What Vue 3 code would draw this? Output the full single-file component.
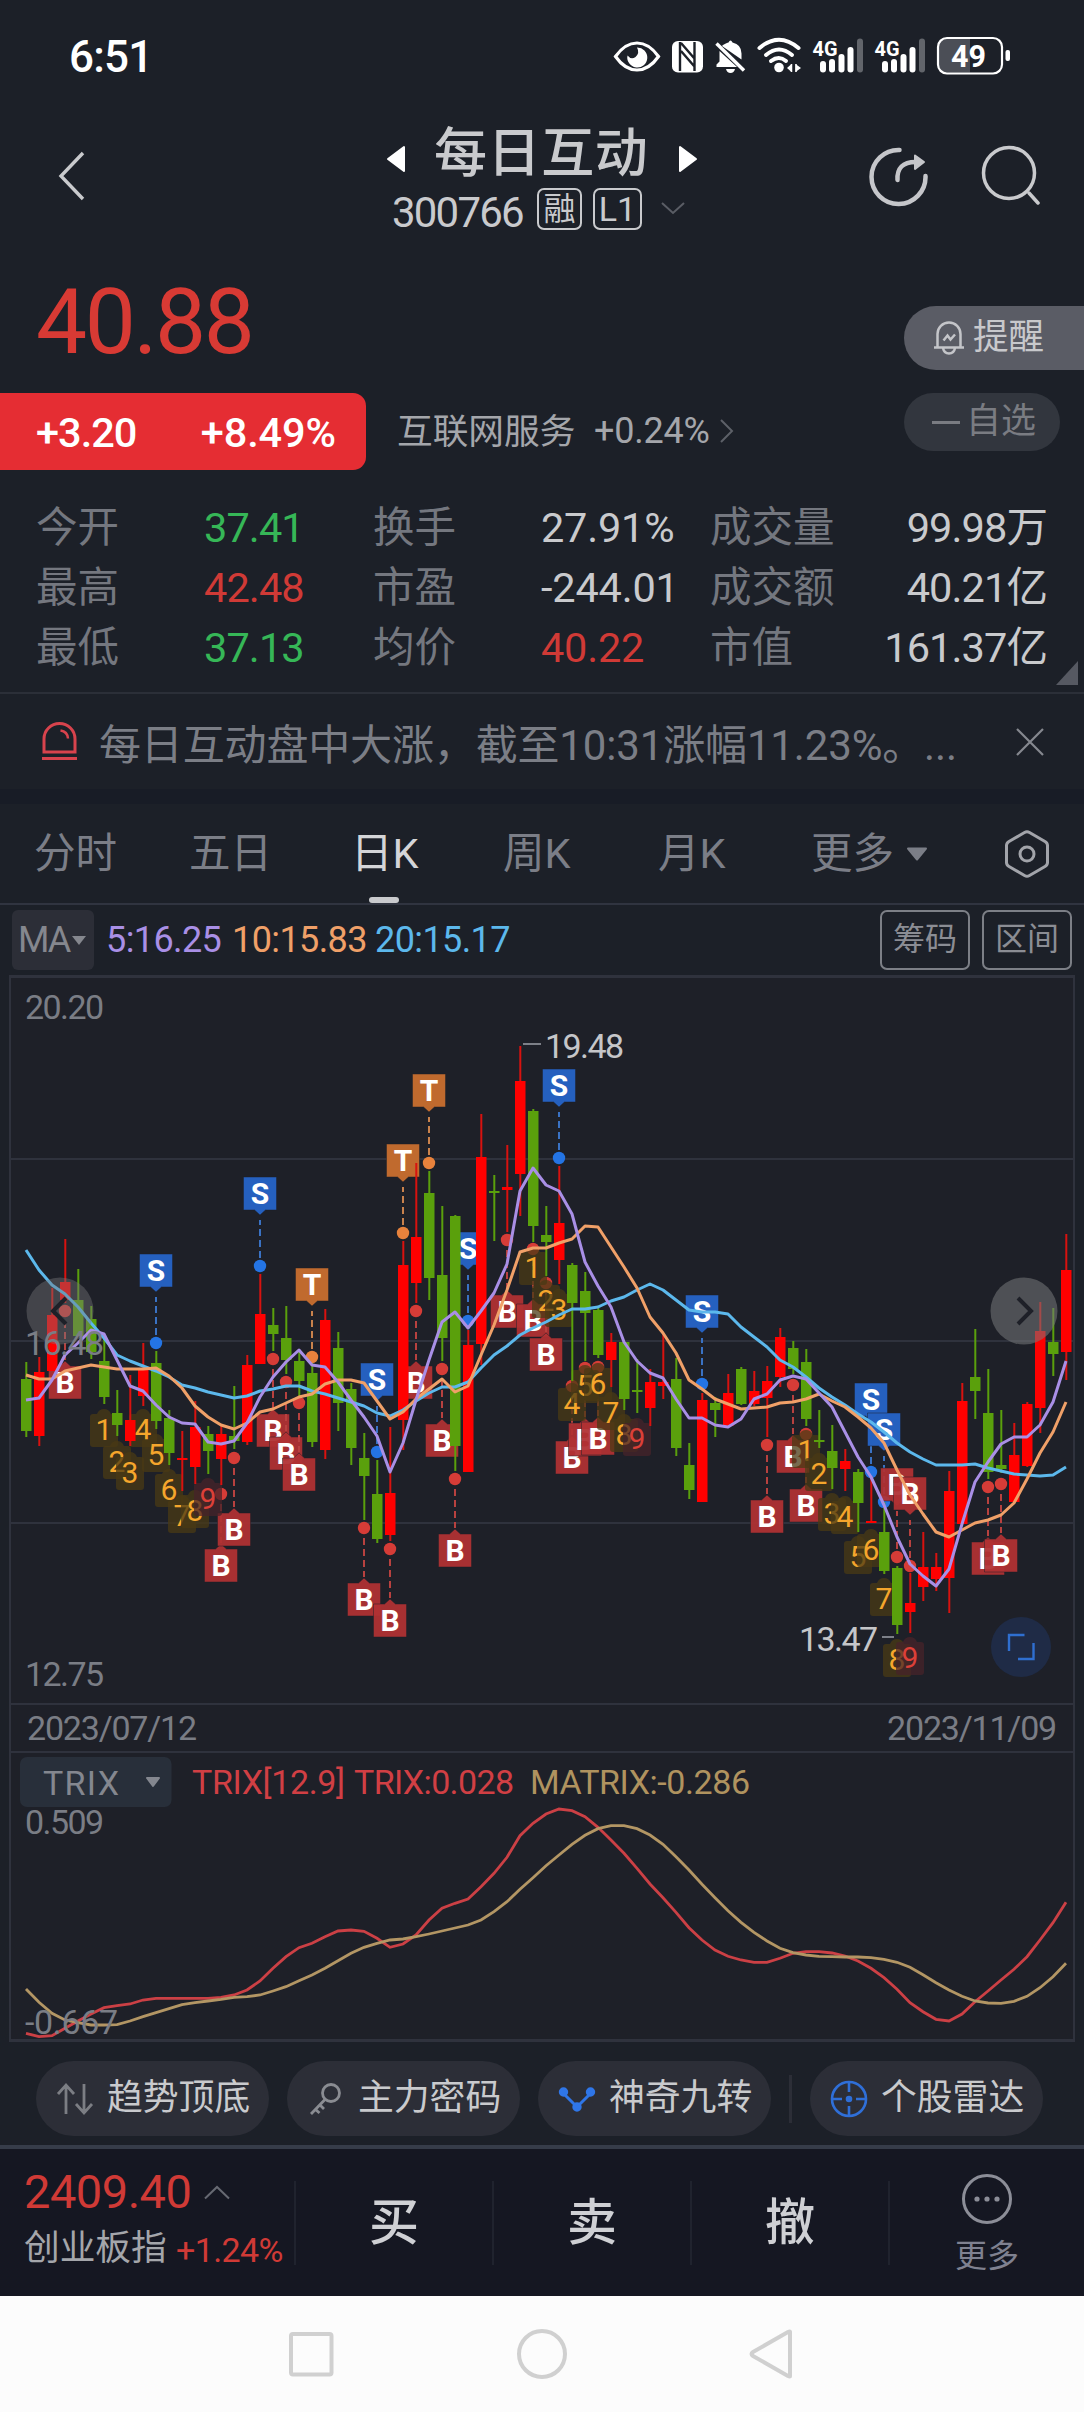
<script setup>
import { computed } from "vue";

const stats = [
  [
    { label: "今开", value: "37.41", tone: "down" },
    { label: "换手", value: "27.91%", tone: "" },
    { label: "成交量", value: "99.98万", tone: "" },
  ],
  [
    { label: "最高", value: "42.48", tone: "up" },
    { label: "市盈", value: "-244.01", tone: "" },
    { label: "成交额", value: "40.21亿", tone: "" },
  ],
  [
    { label: "最低", value: "37.13", tone: "down" },
    { label: "均价", value: "40.22", tone: "up" },
    { label: "市值", value: "161.37亿", tone: "" },
  ],
];

const signalBars = [
  { x: 820, y: 61 },
  { x: 829, y: 59 },
  { x: 838.5, y: 54 },
  { x: 847.5, y: 47 },
  { x: 857, y: 38.5 },
];

// x position of the i-th candle
const STEP = 13;
const xAt = (i) => 26 + i * STEP;

// [up?, high, body top, body bottom, low] in chart coordinates
const rawCandles = [
  [0, 1362, 1379, 1431, 1437], [1, 1357, 1372, 1436, 1446], [1, 1288, 1315, 1371, 1371],
  [1, 1239, 1282, 1300, 1303], [0, 1269, 1300, 1336, 1336], [0, 1306, 1319, 1352, 1359],
  [0, 1335, 1361, 1397, 1404], [0, 1390, 1413, 1425, 1436], [1, 1375, 1420, 1441, 1446],
  [1, 1343, 1369, 1396, 1406], [0, 1351, 1363, 1421, 1429], [0, 1410, 1418, 1453, 1465],
  [1, 1431, 1458, 1460, 1491], [1, 1401, 1427, 1467, 1484], [0, 1426, 1434, 1451, 1474],
  [1, 1426, 1434, 1459, 1485], [0, 1386, 1436, 1441, 1449], [1, 1355, 1365, 1442, 1445],
  [1, 1274, 1314, 1364, 1364], [0, 1308, 1325, 1334, 1351], [0, 1306, 1338, 1360, 1374],
  [0, 1352, 1361, 1381, 1397], [0, 1363, 1373, 1442, 1447], [1, 1309, 1320, 1450, 1459],
  [0, 1332, 1348, 1403, 1431], [0, 1383, 1389, 1448, 1465], [0, 1433, 1458, 1476, 1520],
  [0, 1460, 1494, 1539, 1543], [1, 1427, 1493, 1535, 1541], [1, 1241, 1265, 1420, 1450],
  [1, 1163, 1237, 1283, 1303], [0, 1171, 1193, 1278, 1300], [0, 1206, 1275, 1338, 1361],
  [0, 1215, 1216, 1446, 1471], [1, 1330, 1345, 1472, 1472], [1, 1114, 1157, 1344, 1365],
  [0, 1175, 1191, 1193, 1241], [1, 1145, 1187, 1190, 1232], [1, 1046, 1081, 1174, 1216],
  [0, 1109, 1111, 1226, 1242], [0, 1206, 1235, 1242, 1276], [1, 1166, 1223, 1260, 1284],
  [0, 1263, 1265, 1303, 1381], [0, 1272, 1291, 1313, 1361], [0, 1308, 1310, 1355, 1358],
  [1, 1333, 1342, 1360, 1387], [0, 1342, 1342, 1399, 1410], [0, 1359, 1390, 1392, 1413],
  [1, 1369, 1382, 1408, 1426], [1, 1333, 1382, 1386, 1399], [0, 1358, 1379, 1448, 1456],
  [0, 1443, 1465, 1490, 1499], [1, 1393, 1400, 1502, 1502], [0, 1397, 1403, 1410, 1437],
  [1, 1374, 1393, 1426, 1426], [0, 1367, 1369, 1404, 1405], [1, 1371, 1391, 1404, 1406],
  [1, 1366, 1381, 1398, 1437], [1, 1328, 1337, 1377, 1387], [0, 1341, 1348, 1369, 1374],
  [0, 1349, 1362, 1419, 1426], [0, 1410, 1440, 1442, 1448], [0, 1425, 1451, 1468, 1489],
  [1, 1449, 1461, 1469, 1491], [0, 1469, 1472, 1503, 1532], [1, 1476, 1521, 1523, 1523],
  [0, 1502, 1532, 1571, 1574], [0, 1566, 1568, 1625, 1634], [1, 1573, 1603, 1612, 1633],
  [1, 1532, 1567, 1587, 1601], [1, 1553, 1567, 1579, 1591], [1, 1471, 1491, 1578, 1613],
  [1, 1383, 1401, 1524, 1524], [0, 1329, 1377, 1391, 1419], [0, 1369, 1413, 1472, 1479],
  [0, 1410, 1465, 1469, 1473], [1, 1423, 1455, 1502, 1502], [1, 1402, 1404, 1466, 1467],
  [1, 1302, 1331, 1408, 1433], [0, 1308, 1342, 1354, 1376], [1, 1234, 1270, 1352, 1380],
];

const candles = computed(() =>
  rawCandles.map(([up, high, top, bottom, low], i) => ({
    x: xAt(i),
    cls: up ? "rise" : "fall",
    high,
    top,
    low,
    body: bottom - top,
  }))
);

const ma5 = [
  1400, 1398, 1380, 1355, 1343, 1330, 1334, 1360, 1386, 1391, 1405, 1417, 1423, 1424, 1442, 1444,
  1441, 1423, 1397, 1377, 1362, 1350, 1365, 1367, 1382, 1400, 1417, 1436, 1472, 1443, 1400, 1360,
  1322, 1312, 1328, 1311, 1293, 1264, 1191, 1168, 1185, 1191, 1214, 1262, 1286, 1307, 1342, 1361,
  1373, 1378, 1399, 1418, 1418, 1425, 1427, 1419, 1399, 1394, 1380, 1376, 1379, 1393, 1407, 1432,
  1457, 1477, 1505, 1537, 1564, 1576, 1586, 1569, 1524, 1482, 1462, 1444, 1437, 1437, 1425, 1402,
  1361,
];
const ma10 = [
  1375, 1379, 1379, 1371, 1368, 1365, 1367, 1369, 1369, 1369, 1368, 1376, 1388, 1406, 1417, 1425,
  1429, 1423, 1412, 1409, 1403, 1397, 1394, 1384, 1380, 1380, 1383, 1401, 1419, 1412, 1399, 1389,
  1379, 1392, 1386, 1355, 1325, 1290, 1252, 1248, 1248, 1243, 1239, 1226, 1227, 1247, 1267, 1288,
  1317, 1333, 1353, 1380, 1389, 1399, 1404, 1409, 1408, 1407, 1403, 1402, 1399, 1394, 1401, 1407,
  1417, 1428, 1443, 1470, 1495, 1514, 1532, 1537, 1530, 1523, 1520, 1515, 1503, 1479, 1453, 1432,
  1402,
];
const ma20 = [
  1250, 1270, 1285, 1294, 1307, 1323, 1338, 1355, 1361, 1366, 1371, 1377, 1385, 1388, 1392, 1395,
  1398, 1396, 1391, 1389, 1386, 1386, 1391, 1394, 1398, 1402, 1406, 1413, 1416, 1410, 1401, 1393,
  1387, 1387, 1382, 1368, 1355, 1346, 1335, 1328, 1322, 1315, 1309, 1309, 1307, 1301, 1297, 1290,
  1284, 1290, 1300, 1310, 1312, 1312, 1314, 1327, 1337, 1347, 1360, 1367, 1377, 1388, 1397, 1405,
  1414, 1422, 1432, 1443, 1452, 1459, 1465, 1465, 1465, 1464, 1468, 1471, 1474, 1475, 1476, 1475,
  1467,
];

const trix = [
  1000, 1010, 1007, 985, 963, 942, 923, 917, 912, 900, 895, 895, 895, 895, 895, 892, 885, 870, 843,
  805, 770, 743, 730, 710, 693, 690, 694, 715, 742, 732, 705, 660, 625, 610, 597, 560, 520, 472,
  407, 370, 342, 327, 332, 350, 382, 420, 460, 505, 552, 593, 637, 683, 720, 750, 769, 780, 787,
  787, 775, 760, 755, 755, 759, 768, 783, 805, 833, 868, 908, 935, 958, 963, 942, 905, 873, 840,
  808, 770, 720, 668, 607,
];
const matrix = [
  867, 907, 940, 960, 968, 975, 975, 974, 963, 950, 938, 926, 914, 908, 903, 898, 892, 890, 885,
  873, 860, 842, 825, 805, 782, 760, 742, 730, 720, 717, 710, 702, 693, 684, 675, 660, 635, 605,
  568, 533, 497, 465, 433, 406, 386, 377, 377, 386, 405, 433, 470, 510, 553, 593, 632, 667, 697,
  723, 745, 758, 765, 769, 770, 771, 771, 773, 778, 787, 802, 824, 848, 870, 889, 903, 909, 910,
  904, 889, 863, 830, 790,
];

const line = (values) => values.map((y, i) => `${xAt(i)},${y}`).join(" ");
const oscLine = (values) => values.map((v, i) => `${xAt(i)},${(1700 + v / 3).toFixed(1)}`).join(" ");

// flags hung above a candle: sell (S) and T
const topFlags = [
  [10, "S", 1343], [18, "S", 1266], [22, "T", 1357], [27, "S", 1452], [29, "T", 1233],
  [31, "T", 1163], [34, "S", 1321], [41, "S", 1158], [52, "S", 1384], [65, "S", 1472],
  [66, "S", 1502], [67, "B", 1557], [68, "B", 1566],
];
// buy flags hung below a candle
const bottomFlags = [
  [3, 1311], [15, 1494], [16, 1458], [19, 1359], [20, 1382], [21, 1403], [26, 1528], [28, 1549],
  [30, 1311], [32, 1369], [33, 1479], [37, 1240], [39, 1249], [40, 1283], [42, 1386], [43, 1368],
  [44, 1367], [57, 1445], [59, 1385], [60, 1434], [74, 1487], [75, 1484],
];
// nine-turn counters
const turns = [
  [6, 1, 1429], [7, 2, 1461], [8, 3, 1472], [9, 4, 1429], [10, 5, 1454], [11, 6, 1489],
  [12, 7, 1515], [13, 8, 1510], [14, 9, 1498],
  [39, 1, 1267], [40, 2, 1300], [41, 3, 1309], [42, 4, 1403], [43, 5, 1385], [44, 6, 1383],
  [45, 7, 1412], [46, 8, 1434], [47, 9, 1438],
  [60, 1, 1450], [61, 2, 1473], [62, 3, 1513], [63, 4, 1516], [64, 5, 1556], [65, 6, 1549],
  [66, 7, 1598], [67, 8, 1659], [68, 9, 1657],
];
</script>

<template>
  <div class="screen">
    <!-- system status bar -->
    <div class="status">
      <span class="clock">6:51</span>
      <svg class="status-icons" width="400" height="40" viewBox="612 36 400 40">
        <path d="M615.500 56.500Q625 43 637 43T658.500 56.500Q649 70 637 70T615.500 56.500Z" fill="none" stroke="#fff" stroke-width="3.200" />
        <path d="M637 47.500a10 10 0 1 1-9.500 8q3.500 4.500 8 1.500q4.500-4 1.500-9.500z" fill="#fff" />
        <rect x="672" y="41" width="31" height="31.500" rx="6" fill="#fff" />
        <path d="M680 42v29M694.500 42v29M681 43L694 58M681 51l13 15" stroke="#1c2028" stroke-width="2.400" fill="none" />
        <path d="M723 45q4-2.500 5.500-2.500q1-2 2-2t2 2q9 2 9 11v6L722 46zM719.500 51L737 67H716.500v-2.500l3-3zM726 69h9q-1 4-4.500 4t-4.500-4z" fill="#fff" />
        <path d="M716.500 43.500L744 70.500" stroke="#fff" stroke-width="3.400" />
        <g fill="none" stroke="#fff" stroke-width="4" stroke-linecap="round">
          <path d="M759.500 48Q779 31.500 798.500 48" />
          <path d="M766 55Q779 44 792 55" />
          <path d="M771 61Q779 55 786 61" />
        </g>
        <circle cx="779" cy="67.500" r="4.800" fill="#fff" />
        <path d="M787 68l4.500-4v8zM801 68l-5.500-4v8z" fill="#fff" />
        <path d="M791.500 64v8M796 64v8" stroke="#fff" stroke-width="1.500" />
        <g v-for="dx in [0, 62]" :key="dx" :transform="`translate(${dx} 0)`">
          <text x="812.500" y="55.500" class="net" textLength="25" lengthAdjust="spacingAndGlyphs">4G</text>
          <rect
            v-for="(b, n) in signalBars"
            :key="n"
            :x="b.x"
            :y="b.y"
            width="6"
            :height="72.500 - b.y"
            rx="3"
            :fill="n === 4 ? '#62656b' : '#fff'"
          />
        </g>
        <path d="M970 38.500H947q-8 0-8 8v18q0 8 8 8h23z" fill="#4b4e56" />
        <rect x="938" y="38" width="64" height="35.500" rx="9" fill="none" stroke="#fff" stroke-width="2.200" />
        <rect x="1005.500" y="50" width="4.500" height="11" rx="2" fill="#fff" />
        <text x="951" y="67" class="batt" textLength="35" lengthAdjust="spacingAndGlyphs">49</text>
      </svg>
    </div>

    <!-- title bar -->
    <header class="header">
      <svg class="back" width="28" height="50" viewBox="0 0 28 50">
        <path d="M25 2L3 25L25 48" fill="none" stroke="#c9cacd" stroke-width="3.400" />
      </svg>
      <div class="title">
        <div class="name-row">
          <svg width="20" height="28" viewBox="0 0 20 28"><path d="M18 2v24L2 14z" fill="#fff" stroke="#fff" stroke-width="2" stroke-linejoin="round" /></svg>
          <span class="name">每日互动</span>
          <svg width="20" height="28" viewBox="0 0 20 28"><path d="M2 2v24L18 14z" fill="#fff" stroke="#fff" stroke-width="2" stroke-linejoin="round" /></svg>
        </div>
        <div class="code-row">
          <span class="code">300766</span>
          <span class="tag rong">融</span>
          <span class="tag level">L1</span>
          <svg width="24" height="14" viewBox="0 0 24 14"><path d="M1 1l11 10L23 1" fill="none" stroke="#5a5d65" stroke-width="2" /></svg>
        </div>
      </div>
      <div class="actions">
        <svg width="60" height="62" viewBox="868 145 60 62">
          <path d="M899.500 150A27 27 0 1 0 925.500 176" fill="none" stroke="#c5c6ca" stroke-width="4.500" stroke-linecap="round" />
          <path d="M897.500 180q-1-18 18-18" fill="none" stroke="#c5c6ca" stroke-width="4.500" stroke-linecap="round" />
          <path d="M915 155.500l9 6.500l-9 7z" fill="#c5c6ca" stroke="#c5c6ca" stroke-width="2" stroke-linejoin="round" />
        </svg>
        <svg width="60" height="62" viewBox="980 145 60 62">
          <circle cx="1009" cy="173" r="25.500" fill="none" stroke="#c9cacd" stroke-width="3.500" />
          <path d="M1029 193l9 10" stroke="#c9cacd" stroke-width="3.500" stroke-linecap="round" />
        </svg>
      </div>
    </header>

    <!-- quote -->
    <section class="quote">
      <div class="price-row">
        <span class="price">40.88</span>
        <span class="remind">
          <svg width="34" height="36" viewBox="0 0 34 36" fill="none" stroke="#c4c5c9" stroke-width="2.500">
            <path d="M2 27.500H32M5.500 27V14a11.500 11.500 0 0 1 23 0v13M11 28q1 5.500 6 5.500t6-5.500" />
            <path d="M11.500 20.500l4-5l3 4l4.500-5" />
          </svg>
          <span>提醒</span>
        </span>
      </div>
      <div class="change-row">
        <div class="change">
          <span>+3.20</span>
          <span class="pct">+8.49%</span>
        </div>
        <span class="sector">互联网服务</span>
        <span class="sector-pct">+0.24%</span>
        <svg width="14" height="26" viewBox="0 0 14 26"><path d="M1 2l11 11L1 24" fill="none" stroke="#5d6068" stroke-width="2" /></svg>
        <span class="watch"><i class="dash"></i>自选</span>
      </div>
      <div class="stats">
        <div v-for="(row, r) in stats" :key="r" class="stat-row">
          <div v-for="cell in row" :key="cell.label" class="stat">
            <span class="label">{{ cell.label }}</span>
            <span class="value" :class="cell.tone">{{ cell.value }}</span>
          </div>
        </div>
        <svg class="corner" width="22" height="24" viewBox="0 0 22 24"><path d="M22 0v24H0z" fill="#565962" /></svg>
      </div>
    </section>

    <div class="notice">
      <svg width="38" height="42" viewBox="0 0 38 42" fill="none" stroke="#d8434d" stroke-width="3">
        <path d="M3 31V18a15.500 15.500 0 0 1 31 0v13zM1 37.500h35" />
        <path d="M19.500 9.500q7 1 7.500 8" stroke-width="2.500" />
      </svg>
      <span class="notice-text">每日互动盘中大涨，截至10:31涨幅11.23%。...</span>
      <svg width="28" height="28" viewBox="0 0 28 28"><path d="M1 1l26 26M27 1L1 27" stroke="#85888f" stroke-width="2.200" /></svg>
    </div>

    <nav class="tabs">
      <span class="tab t1">分时</span>
      <span class="tab t2">五日</span>
      <span class="tab t3 active">日K</span>
      <span class="tab t4">周K</span>
      <span class="tab t5">月K</span>
      <span class="tab t6">更多</span>
      <svg class="tri" width="22" height="14" viewBox="0 0 22 14"><path d="M2 1.500h18L11 12.500z" fill="#7b7e87" stroke="#7b7e87" stroke-width="2" stroke-linejoin="round" /></svg>
      <svg class="hex" width="46" height="50" viewBox="0 0 46 50" fill="none" stroke="#a2a4aa" stroke-width="3">
        <path d="M20.500 3.500q2.500-1.500 5 0L41 12.500q2.500 1.500 2.500 4v17q0 2.500-2.500 4L25.500 46.500q-2.500 1.500-5 0L5 37.500q-2.500-1.500-2.500-4v-17q0-2.500 2.500-4z" />
        <circle cx="23" cy="25" r="7" />
      </svg>
    </nav>

    <div class="ma-bar">
      <span class="ma-btn">MA<i class="small-tri"></i></span>
      <span class="ma m5">5:16.25</span>
      <span class="ma m10">10:15.83</span>
      <span class="ma m20">20:15.17</span>
      <span class="box-btn">筹码</span>
      <span class="box-btn">区间</span>
    </div>

    <div class="panel">
      <div class="kline">
        <svg width="1062" height="725" viewBox="11 978 1062 725">
          <g stroke="#2f323d" stroke-width="2">
            <path d="M11 1159H1073M11 1341H1073M11 1523H1073" />
          </g>

          <!-- flags above -->
          <g v-for="([i, kind, dot], n) in topFlags" :key="'t' + n" :class="'flag-' + kind">
            <path class="stem" :d="`M${xAt(i)} ${dot - 8}V${dot - 46}`" />
            <path class="flag" :d="`M${xAt(i) - 16.5} ${dot - 89}h33v33h-11l-5.500 5l-5.500 -5h-11z`" />
            <circle class="dot" :cx="xAt(i)" :cy="dot" r="6.200" />
            <text class="flag-text" :x="xAt(i)" :y="dot - 62" text-anchor="middle">{{ kind }}</text>
          </g>
          <!-- flags below -->
          <g v-for="([i, dot], n) in bottomFlags" :key="'b' + n" class="flag-B">
            <path class="stem" :d="`M${xAt(i)} ${dot + 10}V${dot + 49}`" />
            <path class="flag" :d="`M${xAt(i) - 16.5} ${dot + 55}h11l5.500 -5l5.500 5h11v33h-33z`" />
            <circle class="dot" :cx="xAt(i)" :cy="dot" r="6.200" />
            <text class="flag-text" :x="xAt(i)" :y="dot + 82" text-anchor="middle">B</text>
          </g>
          <!-- nine-turn counters -->
          <g v-for="([i, num, cy], n) in turns" :key="'n' + n" :class="num === 9 ? 'turn last' : 'turn'">
            <path
              class="turn-bg"
              :d="`M${xAt(i) - 14} ${cy - 12}q0 -3 3 -3h4q2 -5 7 -5t7 5h4q3 0 3 3v27q0 3 -3 3h-22q-3 0 -3 -3z`"
            />
            <text class="turn-text" :x="xAt(i)" :y="cy + 10.500" text-anchor="middle">{{ num }}</text>
          </g>

          <g v-for="c in candles" :key="c.x" :class="c.cls">
            <rect :x="c.x - 0.7" :y="c.high" width="2" :height="c.low - c.high" class="wick" />
            <rect :x="c.x - 5" :y="c.top" width="10.500" :height="c.body" />
          </g>

          <polyline class="ma-line" stroke="#5cb8ec" :points="line(ma20)" />
          <polyline class="ma-line" stroke="#f0a068" :points="line(ma10)" />
          <polyline class="ma-line" stroke="#a98fe6" :points="line(ma5)" />

          <path d="M523 1044h18M882 1637h12" stroke="#7d8088" stroke-width="2" />
          <text class="peak" x="545" y="1058" textLength="79">19.48</text>
          <text class="peak" x="799" y="1651" textLength="79">13.47</text>

          <circle cx="60" cy="1311" r="33.500" fill="#77787a" fill-opacity="0.42" />
          <path d="M66 1298l-13 13l13 13" fill="none" stroke="#1e2028" stroke-width="4" />
          <circle cx="1024" cy="1311" r="33.500" fill="#77787a" fill-opacity="0.55" />
          <path d="M1018 1298l13 13l-13 13" fill="none" stroke="#1e2028" stroke-width="4" />
          <circle cx="1021" cy="1647" r="30" fill="#1f2b46" />
          <path d="M1024.500 1635h-15.500v16M1018 1659h15.500v-16" fill="none" stroke="#2f6fd0" stroke-width="2.400" />

          <text class="axis" x="25" y="1019" textLength="79">20.20</text>
          <text class="axis" x="25" y="1355" textLength="79">16.48</text>
          <text class="axis" x="25" y="1686" textLength="79">12.75</text>
        </svg>
      </div>
      <div class="dates">
        <span>2023/07/12</span>
        <span>2023/11/09</span>
      </div>
      <div class="osc">
        <svg width="1062" height="286" viewBox="11 1753 1062 286">
          <rect x="20" y="1757" width="151.500" height="50" rx="7" fill="#282f3a" />
          <text class="osc-text" x="43" y="1795" textLength="76" fill="#84878f">TRIX</text>
          <path d="M147 1778h12l-6 8z" fill="#84878f" stroke="#84878f" stroke-width="2" stroke-linejoin="round" />
          <text class="osc-text" x="192" y="1794" textLength="153" fill="#d13f44">TRIX[12.9]</text>
          <text class="osc-text" x="354" y="1794" textLength="160" fill="#d13f44">TRIX:0.028</text>
          <text class="osc-text" x="530" y="1794" textLength="220" fill="#b0935f">MATRIX:-0.286</text>
          <polyline class="osc-line" stroke="#cc4045" :points="oscLine(trix)" />
          <polyline class="osc-line" stroke="#b39664" :points="oscLine(matrix)" />
          <text class="axis" x="25" y="1834" textLength="79">0.509</text>
          <text class="axis" x="25" y="2034" textLength="93">-0.667</text>
        </svg>
      </div>
    </div>

    <div class="tools">
      <span class="tool">
        <svg width="38" height="38" viewBox="0 0 38 38" fill="none" stroke="#7c7e84" stroke-width="2.800">
          <path d="M10 34V6M2 14l8-9l8 9M28 4v28M20 24l8 9l8-9" />
        </svg>
        趋势顶底
      </span>
      <span class="tool">
        <svg width="38" height="38" viewBox="0 0 38 38" fill="none" stroke="#8a8c92" stroke-width="2.800">
          <circle cx="24" cy="13" r="8.500" />
          <path d="M18 19.500L4 34M8.500 29.500l4 3.500M13 25l4 4" />
        </svg>
        主力密码
      </span>
      <span class="tool">
        <svg width="38" height="38" viewBox="0 0 38 38" fill="#2f76e8" stroke="#2f76e8" stroke-width="3">
          <path d="M5 13L19 27L33 13" fill="none" />
          <circle cx="5.500" cy="12" r="3.200" />
          <circle cx="19" cy="27" r="3.200" />
          <circle cx="32.500" cy="12" r="3.200" />
        </svg>
        神奇九转
      </span>
      <i class="tool-sep"></i>
      <span class="tool">
        <svg width="38" height="38" viewBox="0 0 38 38" fill="none" stroke="#2f6fd8" stroke-width="2.600">
          <circle cx="19" cy="19" r="17" />
          <path d="M19 2v10M19 26v10M2 19h10M26 19h10" />
          <circle cx="19" cy="19" r="2" fill="#2f6fd8" />
        </svg>
        个股雷达
      </span>
    </div>

    <footer class="bottom">
      <div class="index">
        <div class="index-top">
          <span class="index-val">2409.40</span>
          <svg width="26" height="15" viewBox="0 0 26 15"><path d="M1 13.500L13 2l12 11.500" fill="none" stroke="#666972" stroke-width="2" /></svg>
        </div>
        <div class="index-sub">
          <span class="index-name">创业板指</span>
          <span class="index-pct">+1.24%</span>
        </div>
      </div>
      <span class="trade">买</span>
      <span class="trade">卖</span>
      <span class="trade">撤</span>
      <div class="more">
        <svg width="52" height="52" viewBox="0 0 52 52">
          <circle cx="26" cy="26" r="23.500" fill="none" stroke="#8c8e98" stroke-width="3" />
          <g fill="#8c8e98"><circle cx="16" cy="26" r="2.600" /><circle cx="26" cy="26" r="2.600" /><circle cx="36" cy="26" r="2.600" /></g>
        </svg>
        <span>更多</span>
      </div>
    </footer>

    <div class="sysnav">
      <svg width="504" height="54" viewBox="288 2327 504 54" fill="none" stroke="#d0d0d0" stroke-width="4">
        <rect x="291" y="2334" width="40.500" height="40.500" rx="2" />
        <circle cx="542" cy="2354" r="23" />
        <path d="M790 2332v44q0 1-2 0l-35-20q-3-2 0-4l35-20q2-1 2 0z" stroke-linejoin="round" />
      </svg>
    </div>
  </div>
</template>

<style>
body {
  background: #1c2028;
}
</style>

<style scoped>
.screen {
  width: 1084px;
  height: 2412px;
  overflow: hidden;
  background: #1c2028;
  color: #c9cacd;
  font-family: Roboto, "Noto Sans CJK SC", sans-serif;
  white-space: nowrap;
}
.screen svg {
  display: block;
  flex: none;
}

/* status bar */
.status {
  display: flex;
  justify-content: space-between;
  height: 76px;
  padding: 36px 72px 0 69px;
  box-sizing: border-box;
}
.clock {
  color: #fff;
  font-size: 44px;
  font-weight: 500;
  line-height: 43px;
  letter-spacing: -0.8px;
}
.net {
  fill: #fff;
  font-size: 21px;
  font-weight: 700;
}
.batt {
  fill: #fff;
  font-size: 32px;
  font-weight: 700;
}

/* header */
.header {
  display: flex;
  align-items: flex-start;
  height: 184px;
}
.back {
  margin: 75px 0 0 58px;
}
.title {
  width: 330px;
  margin: 41px 0 0 292px;
}
.name-row {
  display: flex;
  align-items: center;
  justify-content: center;
  gap: 28px;
  height: 70px;
  margin-left: -2px;
}
.name-row svg {
  margin-top: 14px;
}
.name {
  padding-top: 3px;
  font-size: 53px;
  font-weight: 500;
  line-height: 70px;
  letter-spacing: 0.6px;
  width: 216px;
}
.code-row {
  display: flex;
  align-items: center;
  height: 44px;
  padding-left: 14px;
}
.code {
  width: 145px;
  font-size: 42px;
  line-height: 44px;
  letter-spacing: -1.8px;
  padding-top: 8px;
}
.tag {
  height: 42px;
  border: 2px solid #c9cacd;
  border-radius: 7px;
  box-sizing: border-box;
  text-align: center;
  line-height: 38px;
}
.rong {
  width: 45px;
  font-size: 32px;
}
.level {
  width: 49px;
  margin: 0 19px 0 11px;
  font-size: 34px;
}
.actions {
  display: flex;
  gap: 52px;
  margin: 69px 0 0 160px;
}

/* quote */
.price-row {
  display: flex;
  justify-content: space-between;
  align-items: flex-start;
  height: 132px;
}
.price {
  padding: 16px 0 0 36px;
  color: #d83a34;
  font-size: 91px;
  line-height: 92px;
  letter-spacing: -2.4px;
}
.remind {
  display: flex;
  align-items: center;
  gap: 7px;
  width: 180px;
  height: 64px;
  margin-top: 46px;
  padding-left: 28px;
  box-sizing: border-box;
  border-radius: 32px 0 0 32px;
  background: #5a5c65;
  color: #c8c9cc;
  font-size: 35.500px;
  line-height: 64px;
}
.remind span {
  margin-top: -3px;
}
.change-row {
  display: flex;
  align-items: center;
  height: 78px;
}
.change {
  display: flex;
  width: 366px;
  height: 77px;
  padding: 0 0 0 36px;
  box-sizing: border-box;
  border-radius: 0 13px 13px 0;
  background: #e52d33;
  color: #fff;
  font-size: 41.500px;
  font-weight: 500;
  line-height: 79px;
  letter-spacing: -1px;
}
.pct {
  margin-left: auto;
  margin-right: 30px;
  letter-spacing: -0.1px;
}
.sector {
  width: 180px;
  margin: -5px 0 0 31px;
  color: #a4a6ab;
  font-size: 35.700px;
}
.sector-pct {
  width: 126px;
  margin-left: 17px;
  color: #a4a6ab;
  font-size: 36px;
  letter-spacing: -0.2px;
}
.watch {
  display: flex;
  align-items: center;
  gap: 6px;
  width: 156px;
  height: 58px;
  margin: -18px 24px 0 auto;
  padding-left: 28px;
  box-sizing: border-box;
  border-radius: 29px;
  background: #32363e;
  color: #7a7c82;
  font-size: 35px;
  line-height: 58px;
}
.dash {
  width: 28px;
  height: 3px;
  background: #7a7c82;
}
.stats {
  position: relative;
  height: 224px;
  padding: 28px 37px 0 36px;
  box-sizing: border-box;
  border-bottom: 2px solid #2b2f38;
}
.stat-row {
  display: flex;
  height: 60px;
}
.stat {
  display: flex;
  width: 337px;
  font-size: 41.500px;
  line-height: 60px;
}
.stat:last-child {
  flex: 1;
  justify-content: space-between;
}
.stat .label {
  width: 168px;
  color: #74777f;
}
.stat .value {
  letter-spacing: -0.9px;
}
.stat:nth-child(2) .value {
  letter-spacing: -0.2px;
}
.stat:last-child .label {
  width: auto;
}
.value.up {
  color: #d03a36;
}
.value.down {
  color: #36b757;
}
.corner {
  position: absolute;
  right: 6px;
  bottom: 7px;
}

/* notice */
.notice {
  display: flex;
  align-items: center;
  height: 95px;
  padding: 0 40px 0 41px;
  border-bottom: 15px solid #181c26;
}
.notice-text {
  flex: 1;
  margin-left: 20px;
  color: #7b7e86;
  font-size: 42px;
  letter-spacing: -0.15px;
}

/* tabs */
.tabs {
  display: flex;
  align-items: center;
  height: 99px;
  padding-left: 34px;
  border-bottom: 2px solid #303440;
  color: #7b7e87;
  font-size: 41.500px;
  line-height: 99px;
}
.tab {
  position: relative;
}
.t1 { width: 155px; }
.t2 { width: 162px; }
.t3 { width: 152px; }
.t4 { width: 155px; }
.t5 { width: 153px; }
.t6 { width: 95px; }
.active {
  color: #d4d5d8;
}
.active::after {
  content: "";
  position: absolute;
  left: 18px;
  bottom: 0;
  width: 30px;
  height: 6px;
  border-radius: 3px;
  background: #c9cacd;
}
.hex {
  margin-left: 76px;
}

/* MA bar */
.ma-bar {
  display: flex;
  align-items: center;
  height: 70px;
  padding: 0 12px;
  font-size: 36px;
}
.ma-btn {
  display: flex;
  align-items: center;
  width: 82px;
  height: 60px;
  margin-right: 12px;
  padding-left: 6px;
  box-sizing: border-box;
  border-radius: 6px;
  background: #2c2e37;
  color: #85878e;
  letter-spacing: -2px;
}
.small-tri {
  margin-left: 3px;
  border: 7px solid transparent;
  border-top: 9px solid #85878e;
  border-bottom: 0;
}
.ma {
  letter-spacing: -0.6px;
}
.m5 {
  width: 126px;
  color: #a98fe6;
}
.m10 {
  width: 143px;
  color: #f0a068;
}
.m20 {
  flex: 1;
  color: #5cb8ec;
}
.box-btn {
  width: 90px;
  height: 60px;
  margin-left: 12px;
  box-sizing: border-box;
  border: 2px solid #7c7f86;
  border-radius: 7px;
  color: #8b8d94;
  font-size: 32px;
  line-height: 55px;
  text-align: center;
}

/* charts */
.panel {
  margin: 0 9px;
  border: 2px solid #2f323d;
  border-width: 3px 2px;
  background: #1e2028;
}
.kline {
  border-bottom: 2px solid #2f323d;
}
.dates {
  display: flex;
  justify-content: space-between;
  height: 46px;
  padding: 0 17px 0 16px;
  border-bottom: 2px solid #2f323d;
  color: #7a7d85;
  font-size: 34px;
  line-height: 47px;
  letter-spacing: -1.2px;
}
.axis,
.peak,
.osc-text {
  font-size: 34px;
}
.axis {
  fill: #7a7d85;
}
.peak {
  fill: #c5c6c9;
}
.rise {
  fill: #ff0000;
}
.fall {
  fill: #5aa00c;
}
.rise .wick {
  fill: #d8120f;
}
.ma-line {
  fill: none;
  stroke-width: 3;
  stroke-linejoin: round;
}
.osc-line {
  fill: none;
  stroke-width: 2.800;
}
.stem {
  fill: none;
  stroke-width: 2;
  stroke-dasharray: 7 4;
}
.flag {
  stroke: #1e2028;
  stroke-opacity: 0.6;
  stroke-width: 0.8;
}
.flag-text {
  fill: #fff;
  font-size: 30px;
  font-weight: 700;
}
.flag-S .flag { fill: #2560bf; }
.flag-S .dot { fill: #2474e4; }
.flag-S .stem { stroke: #3a72c4; }
.flag-T .flag { fill: #c06a2e; }
.flag-T .dot { fill: #e8823c; }
.flag-T .stem { stroke: #c9824c; }
.flag-B .flag { fill: #b03133; fill-opacity: 0.94; }
.flag-B .dot { fill: #d63c37; }
.flag-B .stem { stroke: #b8413f; }
.turn-bg {
  fill: #4a3a14;
  fill-opacity: 0.75;
}
.turn-text {
  fill: #f5a62c;
  font-size: 30px;
}
.last .turn-bg {
  fill: #47232a;
}
.last .turn-text {
  fill: #dc4038;
}

/* tool pills */
.tools {
  display: flex;
  align-items: center;
  gap: 18px;
  height: 107px;
  padding: 10px 0 0 36px;
  box-sizing: border-box;
  border-bottom: 4px solid #363c49;
}
.tool {
  display: flex;
  align-items: center;
  gap: 13px;
  width: 233px;
  height: 75px;
  padding-left: 20px;
  box-sizing: border-box;
  border-radius: 38px;
  background: #2c2e37;
  color: #c9cacd;
  font-size: 35.800px;
  line-height: 75px;
}
.tool-sep {
  width: 3px;
  height: 48px;
  background: #2c2e37;
}

/* bottom bar */
.bottom {
  display: flex;
  align-items: center;
  height: 147px;
  background: #151722;
}
.index {
  width: 270px;
  height: 147px;
  padding-left: 24px;
}
.index-top {
  display: flex;
  align-items: center;
  gap: 13px;
  padding-top: 16px;
}
.index-val {
  width: 167px;
  color: #d03a36;
  font-size: 47px;
  line-height: 54px;
  letter-spacing: -0.5px;
}
.index-sub {
  display: flex;
  align-items: center;
  padding-top: 2px;
}
.index-name {
  width: 152px;
  color: #a4a6ab;
  font-size: 35.700px;
  line-height: 54px;
}
.index-pct {
  padding-top: 4px;
  color: #d03a36;
  font-size: 34px;
  letter-spacing: -0.6px;
}
.trade {
  width: 198px;
  height: 84px;
  box-sizing: border-box;
  border-left: 2px solid #20232e;
  color: #cfd0d4;
  font-size: 50px;
  font-weight: 500;
  line-height: 84px;
  text-align: center;
}
.more {
  display: flex;
  flex: 1;
  flex-direction: column;
  align-items: center;
  height: 84px;
  border-left: 2px solid #20232e;
  color: #7f8190;
  font-size: 32px;
}
.more svg {
  margin-top: -8px;
}
.more span {
  line-height: 60px;
  margin-top: 1px;
}

.sysnav {
  display: flex;
  height: 116px;
  padding: 31px 0 0 288px;
  box-sizing: border-box;
  background: #fcfcfc;
}
</style>
